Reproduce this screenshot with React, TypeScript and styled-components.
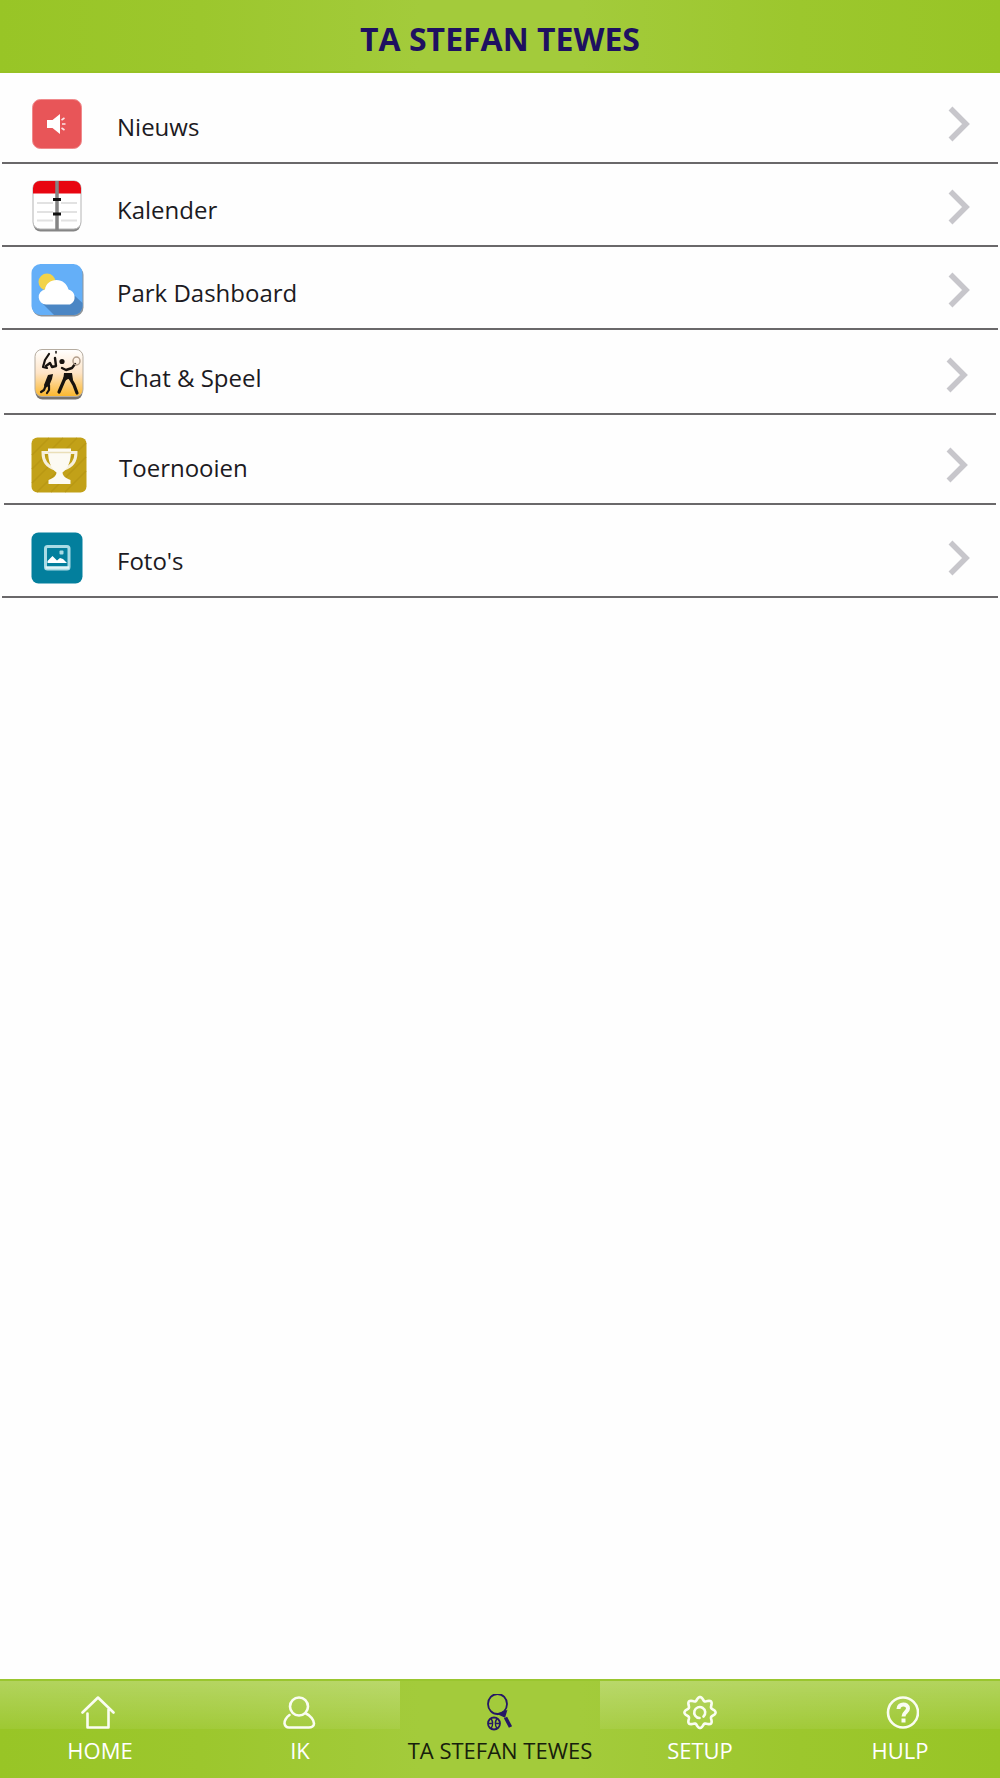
import React from "react";
import styled, { createGlobalStyle } from "styled-components";

const GlobalStyle = createGlobalStyle`
  * { box-sizing: border-box; }
  body {
    margin: 0;
    background: #fefefe;
    font-family: "Segoe UI", "Open Sans", "Noto Sans", sans-serif;
  }
`;

const barGradient =
  "linear-gradient(90deg, #98c526 0%, #9cc72d 20%, #a3cb3b 42%, #a3cb3b 58%, #9cc72d 80%, #98c526 100%)";

const Screen = styled.div`
  min-height: 100vh;
  display: flex;
  flex-direction: column;
`;

const Header = styled.header`
  height: 73px;
  padding-top: 6px;
  display: flex;
  align-items: center;
  justify-content: center;
  background: ${barGradient};
  border-bottom: 2px solid #97c224;
`;

const Title = styled.h1`
  margin: 0;
  font-size: 32px;
  line-height: 40px;
  font-weight: 700;
  color: #1e1060;
`;

const Menu = styled.ul`
  flex: 1;
  margin: 0;
  padding: 0;
  list-style: none;
`;

const Item = styled.li<{ $space: number; $inset: number }>`
  margin: 0 ${(p) => p.$inset}px;
  padding-top: ${(p) => p.$space}px;
  border-bottom: 2px solid #6a686a;
`;

const ItemLink = styled.a`
  height: 78px;
  padding: 2px 27px 0 25px;
  display: flex;
  align-items: center;
  color: #1c1a22;
  text-decoration: none;
`;

const IconSlot = styled.span`
  width: 60px;
  display: flex;
  justify-content: center;
`;

const ItemLabel = styled.span`
  flex: 1;
  padding: 6px 0 0 30px;
  font-size: 24px;
  line-height: 34px;
`;

const TabBar = styled.nav`
  height: 99px;
  display: grid;
  grid-template-columns: repeat(5, 1fr);
  background: ${barGradient};
  border-top: 2px solid #9ac62f;
`;

const Tab = styled.a<{ $active?: boolean }>`
  padding-top: 13px;
  display: flex;
  flex-direction: column;
  align-items: center;
  background: ${(p) =>
    p.$active
      ? "none"
      : "linear-gradient(rgba(255,255,255,0.25), rgba(255,255,255,0.06)) 0 0 / 100% 48px no-repeat"};
  color: ${(p) => (p.$active ? "#17200c" : "#ffffff")};
  text-decoration: none;
`;

const TabLabel = styled.span`
  font-size: 22px;
  line-height: 32px;
  font-weight: 500;
  white-space: nowrap;
`;

const NewsIcon = () => (
  <svg width="50" height="50" viewBox="0 0 50 50" aria-hidden="true">
    <rect x="0.5" y="0.5" width="49" height="49" rx="8" fill="#e85558" stroke="#f08a8c" />
    <path d="M15 21h5.500l7.500-6v20l-7.500-6H15z" fill="#fff" />
    <path d="M29.500 21l3-2M30 25h3.500M29.500 29l3 2" stroke="#fff" strokeWidth="1.600" opacity="0.85" />
  </svg>
);

const CalendarIcon = () => (
  <svg width="50" height="54" viewBox="0 0 50 54" aria-hidden="true">
    <rect x="1.500" y="2" width="47" height="49.500" rx="7" fill="#858585" />
    <rect x="1" y="1" width="48" height="48" rx="7" fill="#fff" stroke="#b4b4b4" />
    <path d="M1 13.500V8a7 7 0 0 1 7-7h34a7 7 0 0 1 7 7v5.500z" fill="#e80611" />
    <path d="M5 23h16M29 23h16M5 32h16M29 32h16M5 40.500h16M29 40.500h16" stroke="#e2e2e2" strokeWidth="2" />
    <path d="M25 1v49" stroke="#858585" strokeWidth="3.500" />
    <path d="M21 19.500h8M21 34h8" stroke="#111" strokeWidth="3" />
  </svg>
);

const WeatherIcon = () => (
  <svg width="54" height="54" viewBox="0 0 54 54" aria-hidden="true">
    <rect x="2.500" y="3" width="51" height="50.500" rx="9" fill="#8f9499" />
    <rect x="1.500" y="1" width="51" height="51" rx="9" fill="#64aff8" />
    <path d="M45 33l7.500 7v3a9 9 0 0 1-9 9H24L11 39z" fill="#4b86c4" />
    <circle cx="17" cy="19" r="8.500" fill="#f2d34a" />
    <path
      d="M16 41.500a7.500 7.500 0 0 1-1-14.900C15.500 21 20.500 17 26.500 17c6 0 10.500 4 12 9.500a8 8 0 0 1 1.500 15z"
      fill="#fff"
    />
  </svg>
);

const PlayIcon = () => (
  <svg width="50" height="52" viewBox="0 0 50 52" aria-hidden="true">
    <defs>
      <linearGradient id="playFill" x1="0" y1="0" x2="0" y2="1">
        <stop offset="0" stopColor="#fff" />
        <stop offset="0.500" stopColor="#fee4c6" />
        <stop offset="1" stopColor="#fbb72c" />
      </linearGradient>
    </defs>
    <rect x="1.500" y="2" width="47" height="48.500" rx="7" fill="#77736e" />
    <rect x="1" y="0.500" width="48" height="47" rx="7" fill="url(#playFill)" stroke="#b5aca0" />
    <g fill="none" stroke="#17130f" strokeLinecap="round" strokeLinejoin="round">
      <path d="M15 5l-4 6-2 7 4 1" strokeWidth="2.200" />
      <path d="M12 17l4-3 2 4 4-1-1-8" strokeWidth="2.400" />
      <path d="M22 2.500v1.500" strokeWidth="1.500" />
      <path d="M28 19l4 2 6-2 3-4" strokeWidth="2.400" />
      <ellipse cx="42.500" cy="12" rx="3.500" ry="4" stroke="#b39f8c" strokeWidth="1.500" />
      <path d="M12 36l-2 5-3 2M15 36v5l-2 3" strokeWidth="2.200" />
      <path d="M31 29l-3 7-3 7M36 29l4 7 3 8" strokeWidth="3.200" />
    </g>
    <path d="M14 26l5-1-1 5-3 7-4 2-1-3z" fill="#17130f" />
    <circle cx="28" cy="12.500" r="2.600" fill="#17130f" />
    <path d="M30 24h8l1 7-5-1-5 3z" fill="#17130f" />
  </svg>
);

const TrophyIcon = () => (
  <svg width="56" height="56" viewBox="0 0 56 56" aria-hidden="true">
    <rect x="0.500" y="0.500" width="55" height="55" rx="6" fill="#c2a118" />
    <path
      d="M1 18L18 1M1 32L32 1M1 46L46 1M6 55L55 6M20 55L55 20M34 55L55 34"
      stroke="#b99814"
      strokeWidth="1.500"
    />
    <path
      d="M18 15.500h-6c0 9 3.500 14 12 16.500M39 15.500h6c0 9-3.500 14-12 16.500"
      fill="none"
      stroke="#f6f0dc"
      strokeWidth="3"
    />
    <path
      d="M17 11.500h23v2c0 12-3.500 18-8.500 22 .5 4 3 5.500 8 7.500v4h-22v-4c5-2 7.500-3.500 8-7.500-5-4-8.500-10-8.500-22z"
      fill="#fcfaf3"
    />
    <path d="M17 15.500h23" stroke="#eadfb8" strokeWidth="1.500" />
  </svg>
);

const PhotoIcon = () => (
  <svg width="52" height="52" viewBox="0 0 52 52" aria-hidden="true">
    <rect x="0.500" y="0.500" width="51" height="51" rx="7" fill="#037f9d" />
    <rect x="14.500" y="14.500" width="23.500" height="22.500" rx="2" fill="none" stroke="#a9dbe5" strokeWidth="3" />
    <path d="M16.500 31v-2l5-5 4.500 4.500 3-2.500 3 1 4 4z" fill="#fff" />
    <path d="M14.500 35.500h23.500" stroke="#e2f4f7" strokeWidth="2.500" />
    <rect x="28.500" y="18.500" width="4" height="4" rx="1" fill="#a9dbe5" />
  </svg>
);

const Chevron = () => (
  <svg width="24" height="36" viewBox="0 0 24 36" aria-hidden="true">
    <path d="M3.500 2.500L19 18 3.500 33.500" fill="none" stroke="#c7c6cb" strokeWidth="5.500" />
  </svg>
);

const HomeIcon = () => (
  <svg width="38" height="40" viewBox="2 0 38 40" fill="none" stroke="#fafdf2" strokeWidth="2.600" strokeLinecap="round" strokeLinejoin="round" aria-hidden="true">
    <path d="M3.500 18.500L19 3.500l15.500 15M8.500 19.500V33.500h21v-18" />
  </svg>
);

const UserIcon = () => (
  <svg width="38" height="40" viewBox="1 0 38 40" fill="none" stroke="#fafdf2" strokeWidth="2.600" strokeLinecap="round" strokeLinejoin="round" aria-hidden="true">
    <circle cx="19" cy="12.500" r="9" />
    <path d="M9.500 21c-3 2-5.500 6-5 8.500.5 2.500 2.500 4 4.500 4h20c2.500 0 5-1.500 5-4 0-3.500-3.500-8-8-10" />
  </svg>
);

const RacketIcon = () => (
  <svg width="38" height="40" viewBox="2 1 38 40" fill="none" stroke="#251766" aria-hidden="true">
    <ellipse cx="18.500" cy="11" rx="9.500" ry="10" strokeWidth="1.800" />
    <path d="M18 21.500l9-3.500M21 21.500l4.500 2 1.500-5z" strokeWidth="1.800" fill="#251766" />
    <path d="M26.500 24.500l5 9.500" strokeWidth="3.600" />
    <circle cx="15" cy="30.500" r="6" strokeWidth="1.800" />
    <path d="M12 25.500c2 3 2 7 0 10M18 25.500c-2 3-2 7 0 10M9 30.500h4M17 30.500h4" strokeWidth="1.400" />
  </svg>
);

const gearPath = Array.from({ length: 96 }, (_, i) => {
  const a = (i / 96) * Math.PI * 2;
  const r = 13.8 + 1.8 * Math.cos(a * 8);
  return `${i ? "L" : "M"}${(19 + r * Math.cos(a)).toFixed(2)} ${(18.5 + r * Math.sin(a)).toFixed(2)}`;
}).join("");

const GearIcon = () => (
  <svg width="38" height="40" viewBox="0 0 38 40" fill="none" stroke="#fafdf2" strokeLinecap="round" strokeLinejoin="round" aria-hidden="true">
    <path d={`${gearPath}Z`} strokeWidth="2.600" />
    <path d="M18.500 24a5.500 5.500 0 1 1 4-1.500" strokeWidth="2.600" />
  </svg>
);

const HelpIcon = () => (
  <svg width="38" height="40" viewBox="-3 0 38 40" fill="none" stroke="#fafdf2" aria-hidden="true">
    <circle cx="19" cy="18.500" r="15" strokeWidth="2.600" />
    <path d="M14.500 15c0-6 9.500-6 9.500-.5 0 3.500-4.500 3.500-4.500 8" strokeWidth="4" />
    <path d="M19.500 24.500v4" strokeWidth="4" />
  </svg>
);

const items = [
  { label: "Nieuws", Icon: NewsIcon, space: 11, inset: 2 },
  { label: "Kalender", Icon: CalendarIcon, space: 3, inset: 2 },
  { label: "Park Dashboard", Icon: WeatherIcon, space: 3, inset: 2 },
  { label: "Chat & Speel", Icon: PlayIcon, space: 5, inset: 4 },
  { label: "Toernooien", Icon: TrophyIcon, space: 10, inset: 4 },
  { label: "Foto's", Icon: PhotoIcon, space: 13, inset: 2 },
];

const tabs = [
  { label: "HOME", Icon: HomeIcon },
  { label: "IK", Icon: UserIcon },
  { label: "TA STEFAN TEWES", Icon: RacketIcon, active: true },
  { label: "SETUP", Icon: GearIcon },
  { label: "HULP", Icon: HelpIcon },
];

export default function App() {
  return (
    <Screen>
      <GlobalStyle />
      <Header>
        <Title>TA STEFAN TEWES</Title>
      </Header>
      <Menu>
        {items.map(({ label, Icon, space, inset }) => (
          <Item key={label} $space={space} $inset={inset}>
            <ItemLink href="#">
              <IconSlot>
                <Icon />
              </IconSlot>
              <ItemLabel>{label}</ItemLabel>
              <Chevron />
            </ItemLink>
          </Item>
        ))}
      </Menu>
      <TabBar>
        {tabs.map(({ label, Icon, active }) => (
          <Tab key={label} href="#" $active={active} aria-current={active ? "page" : undefined}>
            <Icon />
            <TabLabel>{label}</TabLabel>
          </Tab>
        ))}
      </TabBar>
    </Screen>
  );
}
